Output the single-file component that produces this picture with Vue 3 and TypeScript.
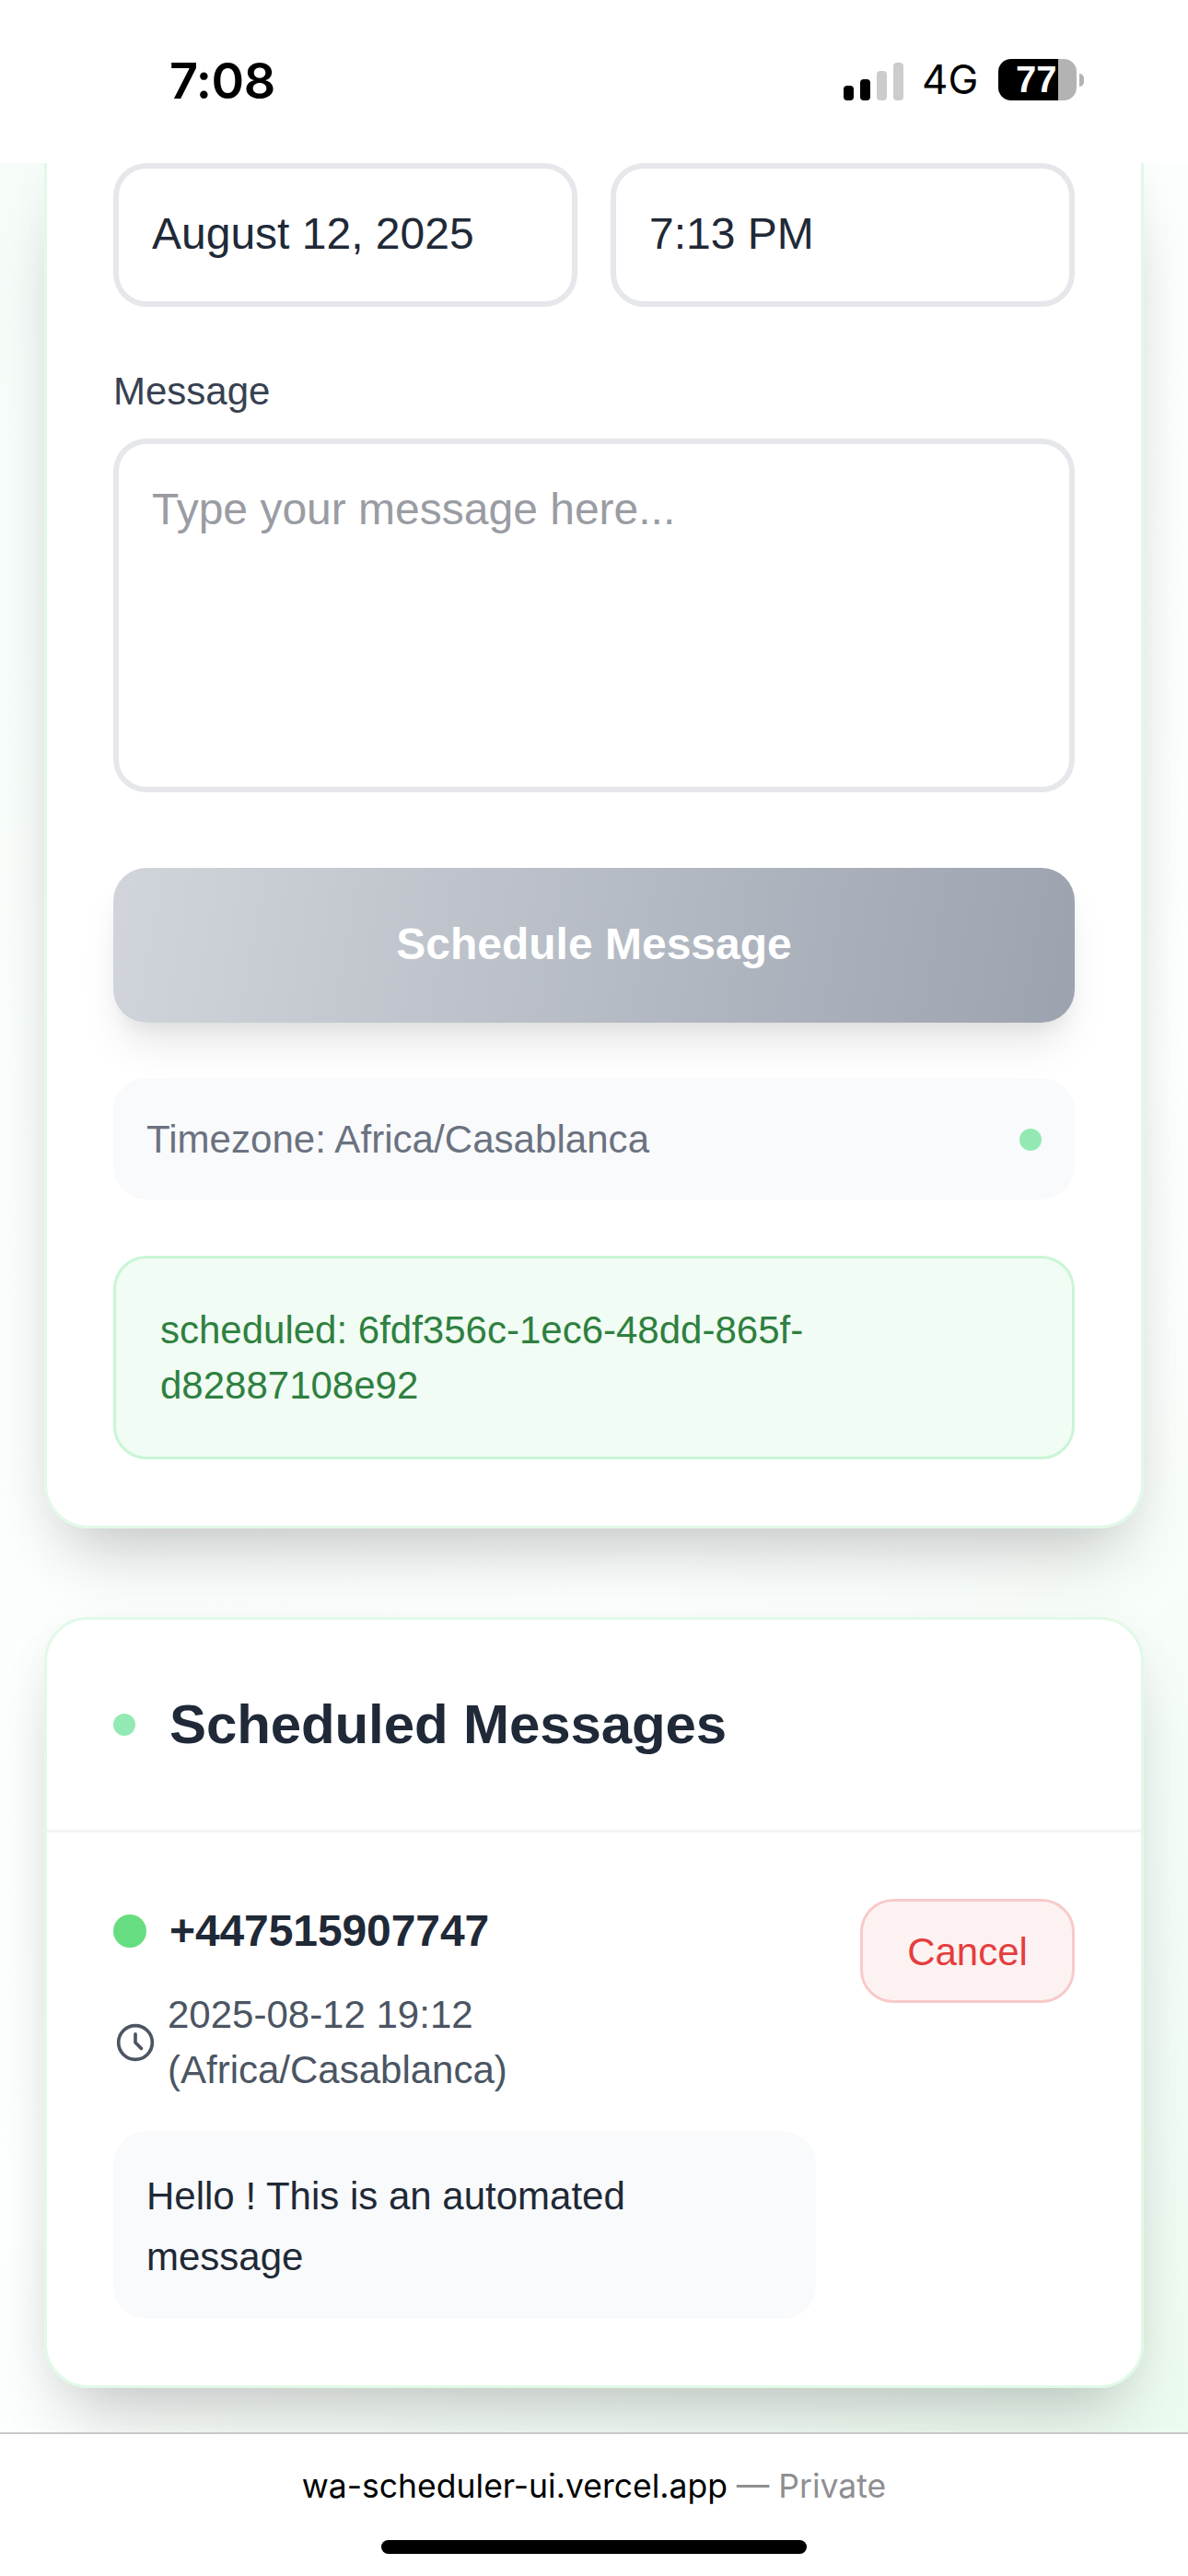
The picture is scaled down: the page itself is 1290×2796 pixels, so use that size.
<script setup lang="ts">
const signalBars = [
  { height: 16, on: true },
  { height: 23, on: true },
  { height: 32, on: false },
  { height: 41, on: false },
];
</script>

<template>
  <div class="phone">
    <header class="status">
      <span class="clock">7:08</span>
      <div class="status-right">
        <div class="signal">
          <i
            v-for="(bar, i) in signalBars"
            :key="i"
            :class="{ on: bar.on }"
            :style="{ height: bar.height + 'px' }"
          ></i>
        </div>
        <span class="net">4G</span>
        <div class="battery"><span>77</span></div>
        <div class="nub"></div>
      </div>
    </header>

    <main class="content">
      <section class="card form-card">
        <div class="two-col">
          <input class="field" type="text" value="August 12, 2025" />
          <input class="field" type="text" value="7:13 PM" />
        </div>
        <label class="label">Message</label>
        <textarea class="field area" placeholder="Type your message here..."></textarea>
        <button class="submit">Schedule Message</button>
        <div class="tz">
          <span>Timezone: Africa/Casablanca</span>
          <i class="tz-dot"></i>
        </div>
        <div class="success">scheduled: 6fdf356c-1ec6-48dd-865f-d82887108e92</div>
      </section>

      <section class="card list-card">
        <div class="list-head">
          <i class="head-dot"></i>
          <h2>Scheduled Messages</h2>
        </div>
        <div class="list-body">
          <div class="item">
            <div class="item-main">
              <div class="phone-row">
                <i class="phone-dot"></i>
                <span>+447515907747</span>
              </div>
              <div class="when">
                <svg viewBox="0 0 24 24" width="44" height="44" fill="none" stroke="#4b5563" stroke-width="2" stroke-linecap="round" stroke-linejoin="round">
                  <circle cx="12" cy="12" r="10" />
                  <path d="M12 7v5l3.5 3.5" />
                </svg>
                <span>2025-08-12 19:12 (Africa/Casablanca)</span>
              </div>
              <div class="bubble">Hello ! This is an automated message</div>
            </div>
            <button class="cancel">Cancel</button>
          </div>
        </div>
      </section>
    </main>

    <footer class="bottom">
      <div class="url">wa-scheduler-ui.vercel.app <span>— Private</span></div>
      <div class="home"></div>
    </footer>
  </div>
</template>

<style>
html,
body {
  margin: 0;
  background: #fff;
}
</style>

<style scoped>
.phone {
  width: 1290px;
  height: 2796px;
  display: flex;
  flex-direction: column;
  overflow: hidden;
  font-family: "Liberation Sans", Arial, sans-serif;
  background: #fff;
}

.status {
  height: 177px;
  flex: none;
  background: #fff;
  display: flex;
  justify-content: space-between;
  position: relative;
  z-index: 2;
  font-family: Inter, "Liberation Sans", sans-serif;
  color: #000;
}

.clock {
  margin: 56px 0 0 184px;
  font-size: 54px;
  line-height: 63px;
  font-weight: 600;
  letter-spacing: -0.5px;
}

.status-right {
  display: flex;
  align-items: center;
  height: 45px;
  margin: 64px 113px 0 0;
}

.signal {
  display: flex;
  align-items: flex-end;
  gap: 7px;
  height: 41px;
  margin-top: 4px;
}

.signal i {
  width: 11px;
  border-radius: 4px;
  background: #ccc;
}

.signal i.on {
  background: #000;
}

.net {
  font-size: 44px;
  line-height: 45px;
  margin-left: 20px;
  width: 83px;
}

.battery {
  width: 85px;
  height: 45px;
  border-radius: 14px;
  background: linear-gradient(90deg, #000 76%, #b3b3b3 76%);
  color: #fff;
  font-family: "Liberation Sans", sans-serif;
  font-weight: 700;
  font-size: 40px;
  line-height: 45px;
  box-sizing: border-box;
  padding-left: 19px;
}

.nub {
  width: 5px;
  height: 14px;
  margin-left: 3px;
  border-radius: 0 7px 7px 0;
  background: #b3b3b3;
}

.content {
  flex: 1;
  min-height: 0;
  overflow: hidden;
  box-sizing: border-box;
  padding: 0 48px;
  background: linear-gradient(135deg, #f6fdf9 0%, #feffff 60%, #ecfbf0 100%);
}

.card {
  background: rgba(255, 255, 255, 0.95);
  border: 3px solid #e1f9e7;
  box-sizing: border-box;
  box-shadow: 0 45px 75px -24px rgba(0, 0, 0, 0.22), 0 0 48px rgba(0, 0, 0, 0.03);
}

.form-card {
  border-top: 0;
  border-radius: 0 0 48px 48px;
  padding: 0 72px 72px;
}

.two-col {
  display: grid;
  grid-template-columns: 1fr 1fr;
  gap: 36px;
  margin-bottom: 60px;
}

.field {
  display: block;
  width: 100%;
  box-sizing: border-box;
  height: 156px;
  margin: 0;
  padding: 0 36px 4px;
  border: 6px solid #e5e7eb;
  border-radius: 36px;
  background: #fff;
  color: #1f2937;
  font-family: inherit;
  font-size: 48px;
  outline: none;
}

.area {
  height: 384px;
  padding: 36px;
  line-height: 70px;
  resize: none;
}

.area::placeholder {
  color: #9a9ca3;
  opacity: 1;
}

.label {
  display: block;
  margin-bottom: 21px;
  padding-top: 2px;
  font-size: 42px;
  line-height: 60px;
  color: #374151;
}

.submit {
  display: block;
  width: 100%;
  height: 168px;
  margin-top: 82px;
  padding: 0 0 3px;
  border: 0;
  border-radius: 36px;
  background: linear-gradient(100deg, #d1d5db, #9ca3af);
  box-shadow: 0 30px 45px -9px rgba(0, 0, 0, 0.1), 0 12px 18px -6px rgba(0, 0, 0, 0.05);
  color: #fff;
  font-family: inherit;
  font-size: 48px;
  font-weight: 700;
}

.tz {
  display: flex;
  align-items: center;
  justify-content: space-between;
  height: 132px;
  margin-top: 60px;
  padding: 2px 36px 0;
  box-sizing: border-box;
  border-radius: 36px;
  background: #f9fafb;
  color: #6b7280;
  font-size: 42px;
  letter-spacing: 0.05px;
}

.tz-dot,
.head-dot {
  flex: none;
  width: 24px;
  height: 24px;
  border-radius: 50%;
  background: #93e9b4;
}

.success {
  margin-top: 61px;
  padding: 48px 48px 47px;
  border: 3px solid #c9f5d6;
  border-radius: 36px;
  background: #f1fcf4;
  color: #2f8040;
  font-size: 42px;
  line-height: 60px;
}

.list-card {
  margin-top: 96px;
  border-radius: 48px;
}

.list-head {
  display: flex;
  align-items: center;
  gap: 37px;
  padding: 72px 72px;
  border-bottom: 3px solid #f3f4f6;
}

.list-head h2 {
  margin: 0;
  font-size: 60px;
  line-height: 84px;
  font-weight: 700;
  color: #1f2937;
  letter-spacing: -0.1px;
}

.list-body {
  padding: 72px 72px;
}

.item {
  display: flex;
  align-items: flex-start;
  gap: 48px;
}

.item-main {
  flex: 1;
  min-width: 0;
}

.phone-row {
  display: flex;
  align-items: center;
  gap: 25px;
  font-size: 48px;
  font-weight: 700;
  line-height: 70px;
  color: #1f2937;
  letter-spacing: -0.1px;
}

.phone-dot {
  flex: none;
  width: 36px;
  height: 36px;
  border-radius: 50%;
  background: #66dd80;
}

.when {
  display: flex;
  align-items: center;
  gap: 13px;
  margin-top: 26px;
  font-size: 42px;
  line-height: 60px;
  color: #4b5563;
}

.when svg {
  flex: none;
  margin-left: 2px;
}

.when span {
  max-width: 400px;
}

.bubble {
  margin-top: 36px;
  padding: 38px 36px 34px;
  border-radius: 36px;
  background: #f9fafb;
  color: #1f2937;
  font-size: 42px;
  line-height: 66px;
}

.cancel {
  flex: none;
  width: 233px;
  height: 113px;
  padding: 2px 0 0;
  border: 3px solid #f8caca;
  border-radius: 36px;
  background: #fdf2f2;
  color: #e53e3e;
  font-family: inherit;
  font-size: 42px;
}

.bottom {
  height: 156px;
  flex: none;
  box-sizing: border-box;
  border-top: 2px solid #c8c8c8;
  background: #fff;
  display: flex;
  flex-direction: column;
  align-items: center;
  position: relative;
  z-index: 2;
  font-family: Inter, "Liberation Sans", sans-serif;
}

.url {
  margin-top: 34px;
  font-size: 35.5px;
  line-height: 46px;
  color: #000;
}

.url span {
  color: #8e8e93;
}

.home {
  width: 462px;
  height: 15px;
  margin-top: 35px;
  border-radius: 8px;
  background: #000;
}
</style>
